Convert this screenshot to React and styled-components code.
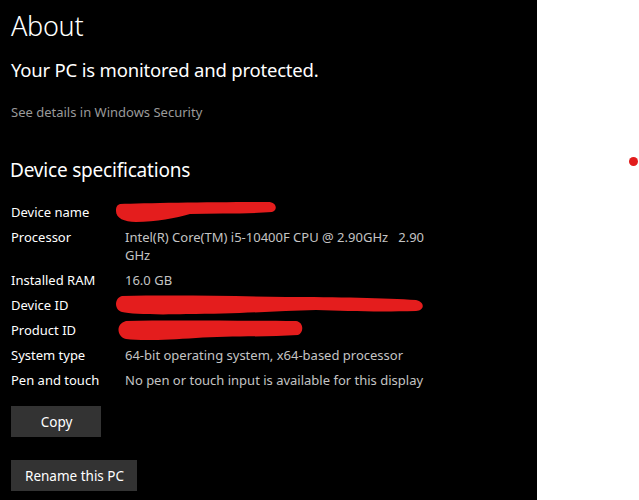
import styled, { createGlobalStyle } from 'styled-components';

const Global = createGlobalStyle`
  html, body {
    margin: 0;
    padding: 0;
    background: #fff;
  }
  body {
    font-family: "Noto Sans", "Open Sans", sans-serif;
  }
`;

const Page = styled.div`
  display: flex;
  width: 639px;
  height: 500px;
  overflow: hidden;
`;

const Panel = styled.div`
  width: 537px;
  height: 500px;
  background: #000;
  color: #fff;
  padding: 6px 0 0 11px;
  box-sizing: border-box;
  display: flex;
  flex-direction: column;
`;

const Title = styled.h1`
  margin: 0;
  font-size: 27px;
  font-weight: 300;
  line-height: 40px;
  letter-spacing: -0.3px;
`;

const Status = styled.div`
  margin-top: 11px;
  font-size: 18.5px;
  line-height: 26px;
  letter-spacing: -0.2px;
`;

const Link = styled.div`
  margin-top: 20px;
  font-size: 13px;
  line-height: 18px;
  color: #9a9a9a;
`;

const Heading = styled.h2`
  margin: 36px 0 0 -1px;
  font-size: 19px;
  font-weight: 400;
  line-height: 26px;
  letter-spacing: -0.2px;
`;

const Specs = styled.div`
  margin-top: 20px;
  display: grid;
  grid-template-columns: 114px 312px;
  row-gap: 7px;
  font-size: 13px;
  line-height: 18px;
`;

const Label = styled.div`
  color: #fff;
`;

const Value = styled.div`
  color: #c4c4c4;
`;

const Scribble = styled.svg`
  display: block;
  margin-left: -9px;
  overflow: visible;
`;

const Button = styled.button`
  align-self: flex-start;
  background: #333;
  color: #fff;
  border: none;
  font-family: inherit;
  font-size: 13.5px;
  height: 31px;
  padding: 0 13px 0 14px;
  min-width: ${p => p.$min || 0}px;
  margin-top: ${p => p.$top}px;
`;

const Side = styled.div`
  flex: 1;
  background: #fff;
  padding: 157px 0 0 92px;
  box-sizing: border-box;
`;

const Dot = styled.div`
  width: 9px;
  height: 9px;
  border-radius: 50%;
  background: #e21c1c;
`;

const RED = '#e41d1d';

const Mark = ({ w, d }) => (
  <Scribble width={w} height={18} viewBox={`0 0 ${w} 18`}>
    <path d={d} fill={RED} />
  </Scribble>
);

const App = () => (
  <>
    <Global />
    <Page>
      <Panel>
        <Title>About</Title>
        <Status>Your PC is monitored and protected.</Status>
        <Link>See details in Windows Security</Link>
        <Heading>Device specifications</Heading>
        <Specs>
          <Label>Device name</Label>
          <Value>
            <Mark
              w={162}
              d="M4 1 C30 0 100 -1 152 -1 C161 -1 162 7 156 9 C130 11 100 10 74 11 C60 15 40 19 20 19 C8 19 0 15 0 8 C0 4 1 2 4 1 Z"
            />
          </Value>
          <Label>Processor</Label>
          <Value>Intel(R) Core(TM) i5-10400F CPU @ 2.90GHz&nbsp;&nbsp; 2.90 GHz</Value>
          <Label>Installed RAM</Label>
          <Value>16.0 GB</Value>
          <Label>Device ID</Label>
          <Value>
            <Mark
              w={307}
              d="M6 0 C60 -1 120 0 170 1 C220 1 270 2 300 4 C309 6 309 14 300 15 C260 16 230 15 200 14 C160 15 120 18 70 18 C40 19 15 18 6 16 C-2 14 -2 2 6 0 Z"
            />
          </Value>
          <Label>Product ID</Label>
          <Value>
            <Mark
              w={187}
              d="M10 0 C60 -1 130 0 180 0 C188 1 188 12 182 14 C150 16 110 15 80 17 C50 19 25 20 10 18 C1 16 -1 3 10 0 Z"
            />
          </Value>
          <Label>System type</Label>
          <Value>64-bit operating system, x64-based processor</Value>
          <Label>Pen and touch</Label>
          <Value>No pen or touch input is available for this display</Value>
        </Specs>
        <Button $top={17} $min={90}>Copy</Button>
        <Button $top={23}>Rename this PC</Button>
      </Panel>
      <Side>
        <Dot />
      </Side>
    </Page>
  </>
);

export default App;
